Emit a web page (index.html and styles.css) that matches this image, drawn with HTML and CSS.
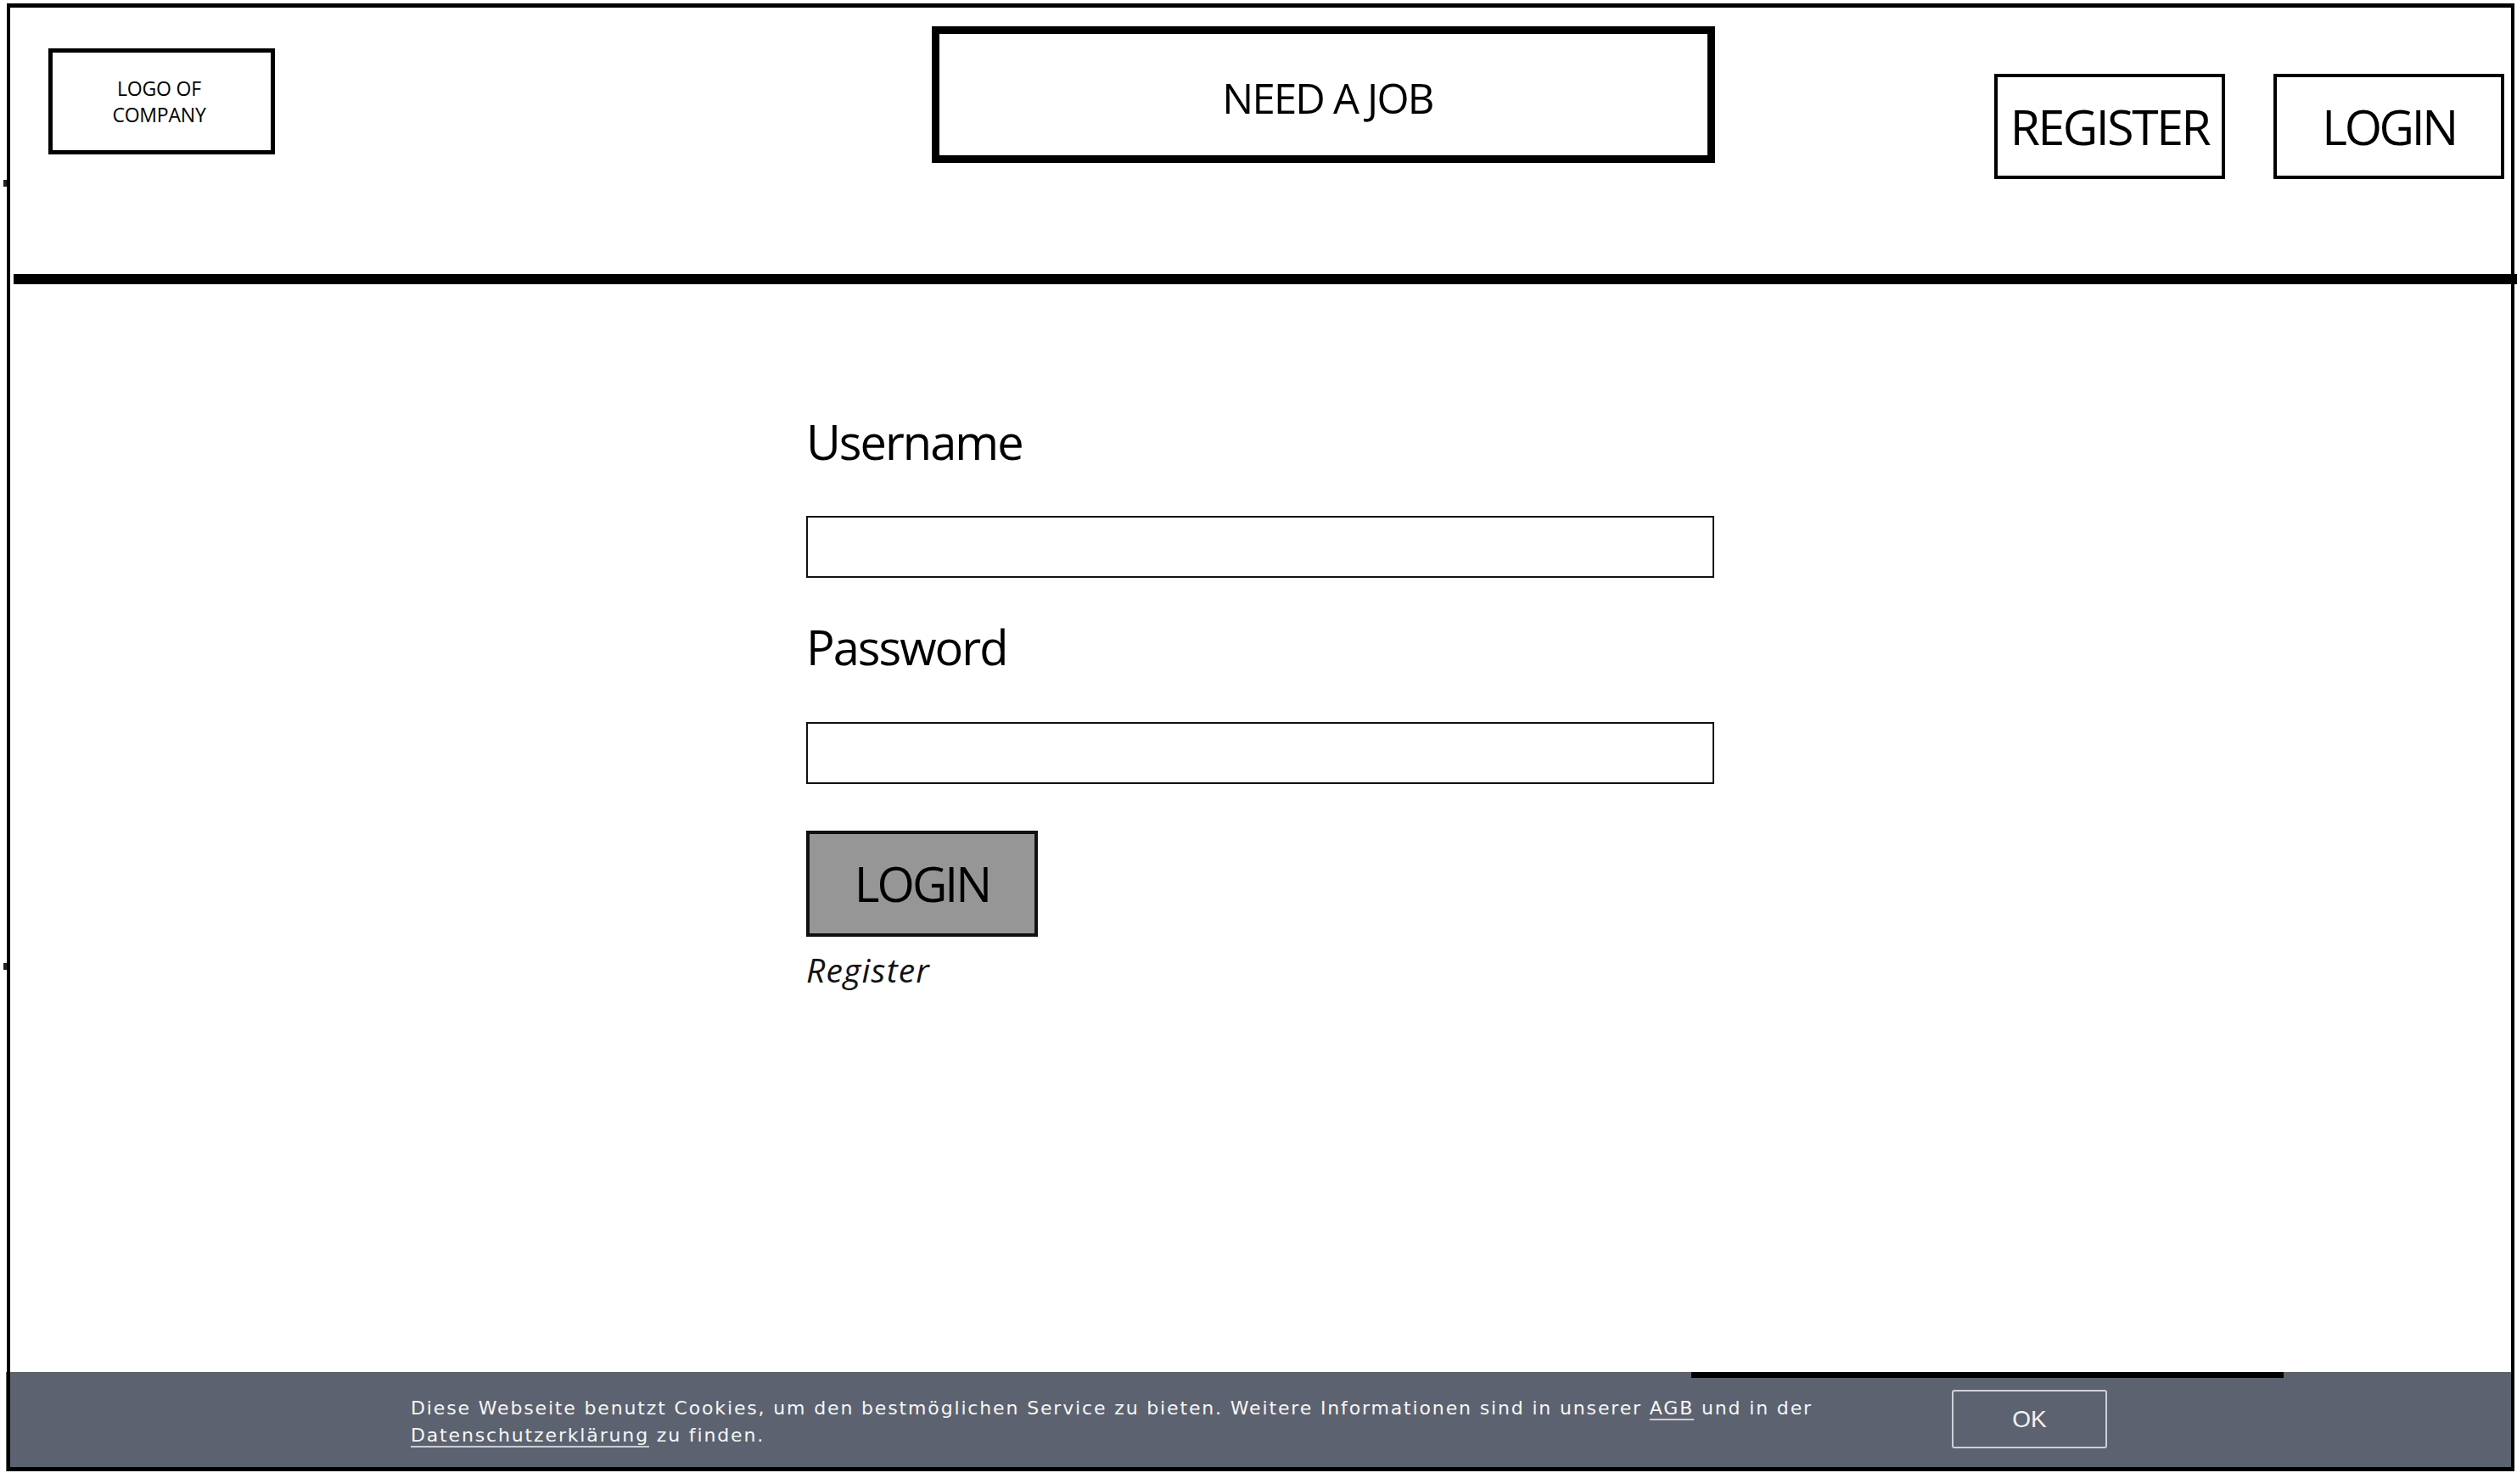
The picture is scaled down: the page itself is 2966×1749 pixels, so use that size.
FILE: index.html
```html
<!DOCTYPE html>
<html lang="de">
<head>
<meta charset="utf-8">
<title>Need a Job – Login</title>
<link rel="stylesheet" href="styles.css">
</head>
<body>
<div class="frame">
  <header class="topbar">
    <div class="logo">LOGO OF<br>COMPANY</div>
    <div class="title">NEED A JOB</div>
    <nav class="nav">
      <a class="nav-btn nav-register" href="#">REGISTER</a>
      <a class="nav-btn nav-login" href="#">LOGIN</a>
    </nav>
  </header>
  <div class="rule"></div>
  <main class="content">
    <form class="login-form">
      <label class="field-label" for="user">Username</label>
      <input class="field-input" id="user" type="text">
      <label class="field-label field-label-pw" for="pw">Password</label>
      <input class="field-input field-input-pw" id="pw" type="password">
      <button class="login-btn" type="button">LOGIN</button>
      <a class="register-link" href="#">Register</a>
    </form>
  </main>
  <div class="cookie-bar">
    <p class="cookie-text">Diese Webseite benutzt Cookies, um den bestmöglichen Service zu bieten. Weitere Informationen sind in unserer <a href="#">AGB</a> und in der<br><a href="#">Datenschutzerklärung</a> zu finden.</p>
    <button class="cookie-ok" type="button">OK</button>
  </div>
</div>
</body>
</html>
```

FILE: styles.css
```css
html, body {
  margin: 0;
  padding: 0;
  background: #fff;
}

body {
  font-family: "Open Sans", "Noto Sans", sans-serif;
  color: #000;
  overflow: hidden;
}

.frame {
  position: relative;
  box-sizing: border-box;
  margin: 4px 0 0 8px;
  width: 2955px;
  height: 1730px;
  padding: 5px 4px 5px 4px;
  display: flex;
  flex-direction: column;
}

.frame::after {
  content: "";
  position: absolute;
  inset: 0;
  border-style: solid;
  border-color: #000;
  border-width: 5px 4px 5px 4px;
  pointer-events: none;
  z-index: 2;
}

/* small marks sticking out of the left edge */
.frame::before {
  content: "";
  position: absolute;
  left: -4px;
  top: 208px;
  width: 4px;
  height: 8px;
  background: #222;
  box-shadow: 0 923px 0 #222;
}

/* ---------- header ---------- */
.topbar {
  display: flex;
  align-items: flex-start;
  height: 314px;
  padding: 0 8px 0 45px;
  box-sizing: border-box;
}

.logo {
  box-sizing: border-box;
  margin-top: 48px;
  width: 267px;
  height: 125px;
  border: 5px solid #000;
  display: flex;
  align-items: center;
  justify-content: center;
  text-align: center;
  padding-right: 6px;
  font-size: 23px;
  line-height: 31px;
  letter-spacing: -0.2px;
}

.title {
  box-sizing: border-box;
  margin: 22px 0 0 774px;
  width: 923px;
  height: 161px;
  border: 9px solid #000;
  display: flex;
  align-items: center;
  justify-content: center;
  padding: 8px 0 0 10px;
  font-size: 49px;
  letter-spacing: -1.8px;
  line-height: 1;
}

.nav {
  display: flex;
  gap: 57px;
  margin: 78px 0 0 auto;
}

.nav-btn {
  box-sizing: border-box;
  width: 272px;
  height: 124px;
  border: 4px solid #000;
  display: flex;
  align-items: center;
  justify-content: center;
  font-size: 57px;
  line-height: 1;
  color: #000;
  text-decoration: none;
  letter-spacing: -2.4px;
}

.nav-login {
  letter-spacing: -3.4px;
}

.rule {
  height: 12px;
  background: #000;
  margin: 0 -7px 0 4px;
  flex: none;
}

/* ---------- login form ---------- */
.content {
  flex: 1;
  padding: 152px 0 0 938px;
}

.login-form {
  display: flex;
  flex-direction: column;
  align-items: flex-start;
  width: 1070px;
  margin: 0;
}

.field-label {
  font-size: 56px;
  line-height: 67px;
  letter-spacing: -2px;
}

.field-label-pw {
  margin-top: 48px;
}

.field-input {
  box-sizing: border-box;
  display: block;
  width: 1070px;
  height: 73px;
  margin-top: 54px;
  border: 2px solid #111;
  border-radius: 0;
  background: #fff;
  padding: 0;
  outline: none;
}

.field-input-pw {
  margin-top: 55px;
}

.login-btn {
  box-sizing: border-box;
  margin-top: 55px;
  width: 273px;
  height: 125px;
  border: 4px solid #111;
  background: #969696;
  font-family: "Open Sans", "Noto Sans", sans-serif;
  font-size: 57px;
  line-height: 1;
  letter-spacing: -3px;
  color: #000;
  padding: 0;
  display: flex;
  align-items: center;
  justify-content: center;
}

.register-link {
  margin-top: 15px;
  font-size: 39px;
  line-height: 47px;
  font-style: italic;
  letter-spacing: 1.2px;
  color: #111;
  text-decoration: none;
}

/* ---------- cookie banner ---------- */
.cookie-bar {
  position: absolute;
  left: -1px;
  top: 1613px;
  width: 2952px;
  height: 126px;
  z-index: 1;
  background: #5c6270;
  display: flex;
  align-items: flex-start;
  padding-left: 477px;
  box-sizing: border-box;
}

.cookie-bar::before {
  content: "";
  position: absolute;
  left: 1986px;
  top: 0;
  width: 698px;
  height: 7px;
  background: #000;
}

.cookie-text {
  flex: none;
  width: 1816px;
  margin: 27px 0 0 0;
  font-family: "DejaVu Sans", "Liberation Sans", sans-serif;
  font-size: 22px;
  line-height: 32px;
  letter-spacing: 1.85px;
  color: #f6f6f6;
}

.cookie-text a {
  color: inherit;
  text-decoration: underline;
  text-decoration-color: #c9ccd2;
  text-decoration-thickness: 2px;
  text-underline-offset: 5px;
}

.cookie-ok {
  box-sizing: border-box;
  margin-top: 21px;
  width: 183px;
  height: 69px;
  border: 2px solid #cdd0d5;
  border-radius: 3px;
  background: transparent;
  color: #f2f2f2;
  font-family: "Liberation Sans", Arial, sans-serif;
  font-size: 28px;
  padding: 0;
}
```
